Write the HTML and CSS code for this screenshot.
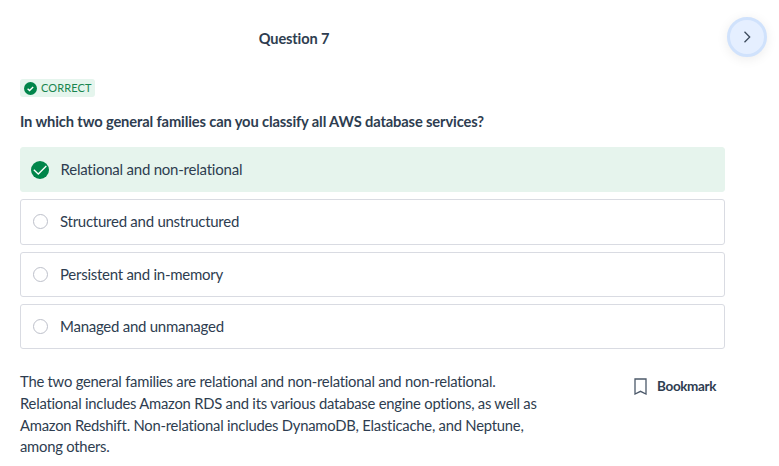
FILE: index.html
```html
<!DOCTYPE html>
<html lang="en">
<head>
<meta charset="utf-8">
<title>Question 7</title>
<link rel="stylesheet" href="styles.css">
</head>
<body>
<header class="top">
  <h1 class="title">Question 7</h1>
  <button class="next" aria-label="Next"><svg width="16" height="16" viewBox="0 0 16 16"><path d="M5.5 2.8 10.7 8 5.5 13.2"/></svg></button>
</header>
<main class="quiz">
  <div class="badge"><svg class="check" width="13" height="13" viewBox="0 0 18 18"><circle cx="9" cy="9" r="9"/><path class="bold" d="m5 9.3 2.7 2.5 5-5"/></svg><span>CORRECT</span></div>
  <h2 class="question">In which two general families can you classify all AWS database services?</h2>
  <ul class="options">
    <li class="option correct"><svg class="check" width="18" height="18" viewBox="0 0 18 18"><circle cx="9" cy="9" r="9"/><path d="m2.8 8.8 4.5 4.2 8-8"/></svg><span>Relational and non-relational</span></li>
    <li class="option"><i class="radio"></i><span>Structured and unstructured</span></li>
    <li class="option"><i class="radio"></i><span>Persistent and in-memory</span></li>
    <li class="option"><i class="radio"></i><span>Managed and unmanaged</span></li>
  </ul>
  <div class="footer">
    <p class="explanation">The two general families are relational and non-relational and non-relational. Relational includes Amazon RDS and its various database engine options, as well as Amazon Redshift. Non-relational includes DynamoDB, Elasticache, and Neptune, among others.</p>
    <button class="bookmark"><svg width="13" height="17" viewBox="0 0 13 17"><path d="M1 1h11v15l-5.5-2.7L1 16z"/></svg><span>Bookmark</span></button>
  </div>
</main>
</body>
</html>
```
FILE: styles.css
```css
* { box-sizing: border-box; }
body { margin: 0; background: #fff; color: #2e3d50; font-family: Lato, sans-serif; font-size: 15px; letter-spacing: -.26px; overflow: hidden; }
button { border: 0; padding: 0; background: none; font: inherit; color: inherit; letter-spacing: inherit; }
.top { display: grid; grid-template-columns: 588px 1fr; align-items: center; height: 77px; padding-right: 12px; }
.title { margin: 0; text-align: center; font-size: 14.6px; line-height: 22px; letter-spacing: -.15px; }
.next { justify-self: end; display: grid; place-items: center; width: 40px; height: 40px; margin-top: -3px; border: 3px solid #d0e2fc; border-radius: 50%; background: #e5efff; box-shadow: 0 2px 12px rgb(0 0 0 / 8%); }
.next path { fill: none; stroke: #3c4a5c; stroke-width: 1.3; }
.quiz { width: 725px; padding: 2px 0 0 20px; }
.badge { display: flex; align-items: center; gap: 4px; width: 75px; height: 18px; padding-left: 4px; border-radius: 3px; background: #e5f5ed; color: #17854f; font-size: 11px; line-height: 18px; letter-spacing: .1px; }
.check circle { fill: #00854a; }
.check path { fill: none; stroke: #fff; stroke-width: 1.3; }
.check .bold { stroke-width: 1.9; }
.question { margin: 14px 0 15px; font-size: 14.7px; line-height: 21px; letter-spacing: -.135px; }
.options { display: grid; gap: 7.2px; margin: 0; padding: 0; list-style: none; }
.option { display: flex; align-items: center; gap: 12px; height: 45.2px; padding-left: 12px; border: 1px solid #d9dbe2; border-radius: 3px; }
.option span { margin-top: -1px; }
.option.correct { gap: 11.5px; border-color: #e6f4ed; background: #e6f4ed; padding-left: 10px; letter-spacing: -.22px; }
.radio { width: 15px; height: 15px; border: 1px solid #bdc0ca; border-radius: 50%; }
.footer { display: flex; justify-content: space-between; align-items: flex-start; padding-top: 22px; }
.explanation { width: 530px; margin: 0; font-size: 14.8px; line-height: 21.6px; letter-spacing: -.23px; }
.bookmark { display: flex; align-items: center; gap: 10px; margin: 5px 9px 0 0; font-size: 13.5px; font-weight: 700; line-height: 21px; letter-spacing: -.38px; }
.bookmark path { fill: none; stroke: #4c596a; stroke-width: 1.3; }
```
